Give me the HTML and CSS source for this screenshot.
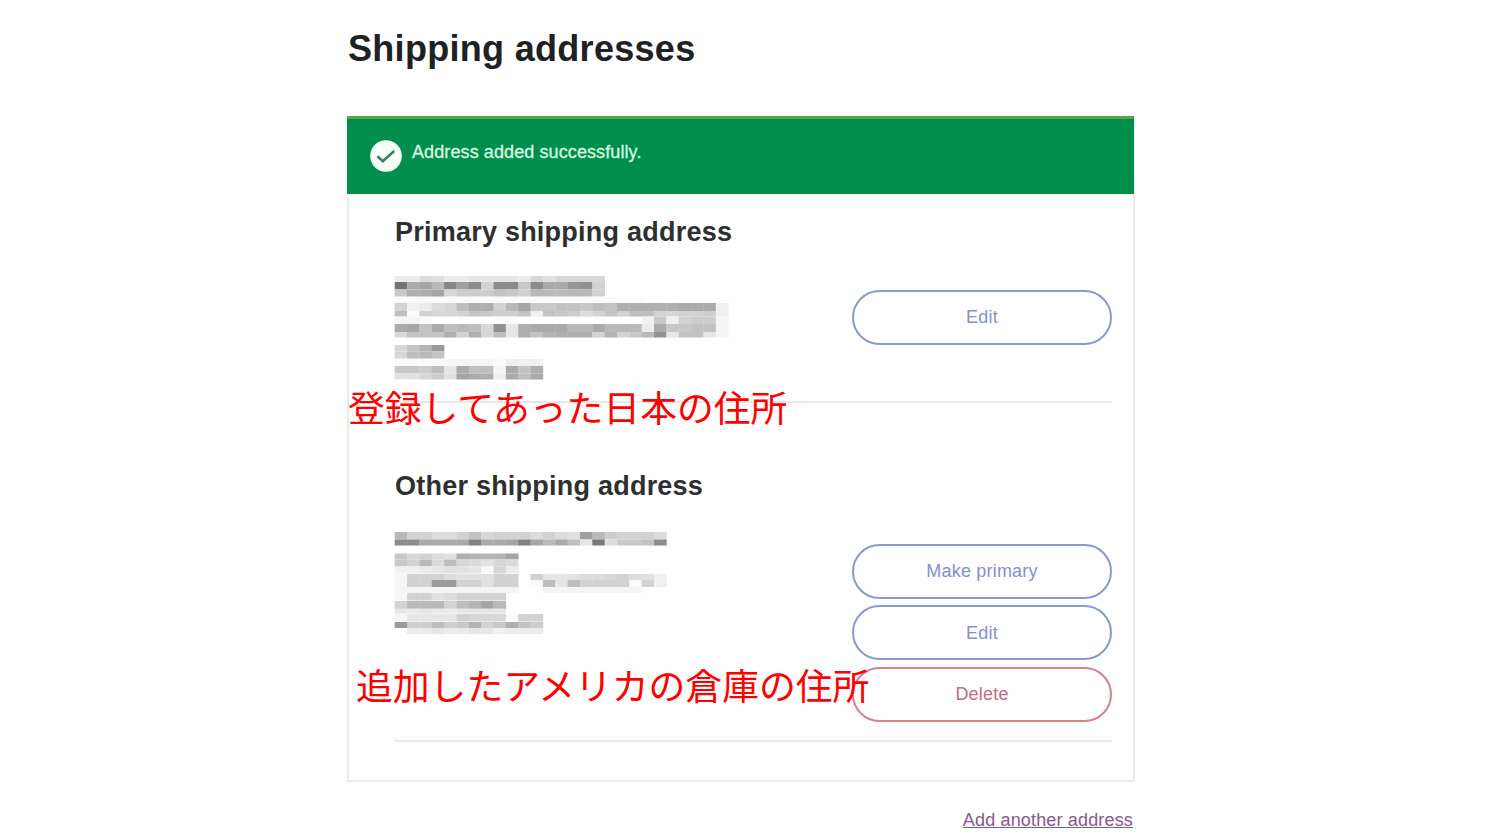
FILE: index.html
```html
<!DOCTYPE html>
<html lang="en">
<head>
<meta charset="utf-8">
<title>Shipping addresses</title>
<link rel="stylesheet" href="styles.css">
</head>
<body>
<main class="page">
  <h1 class="title">Shipping addresses</h1>
  <section class="card">
    <div class="notice">
      <svg class="notice-icon" viewBox="0 0 32 32"><circle cx="16" cy="16" r="15.8" fill="#f4fff8"/><path d="M7.5 16.2l5.3 5L24.2 11" fill="none" stroke="#3e7f60" stroke-width="2.6"/></svg>
      <span class="notice-text">Address added successfully.</span>
    </div>
    <article class="address primary">
      <h2 class="subtitle">Primary shipping address</h2>
      <div class="row">
        <svg class="redacted" id="redacted-primary" width="350" height="112"></svg>
        <div class="actions"><button class="btn">Edit</button></div>
      </div>
      <p class="note note-japan" lang="ja">登録してあった日本の住所</p>
    </article>
    <article class="address other">
      <h2 class="subtitle">Other shipping address</h2>
      <div class="row">
        <svg class="redacted" id="redacted-other" width="350" height="112"></svg>
        <div class="actions">
          <button class="btn">Make primary</button>
          <button class="btn">Edit</button>
          <button class="btn danger">Delete</button>
        </div>
      </div>
      <p class="note note-usa" lang="ja">追加したアメリカの倉庫の住所</p>
    </article>
  </section>
  <a class="add" href="#">Add another address</a>
</main>
<script src="script.js"></script>
</body>
</html>
```
FILE: styles.css
```css
* { box-sizing: border-box; }
html, body { overflow: hidden; }
body {
  margin: 0;
  height: 838px;
  background: #fefefe;
  font-family: "Liberation Sans", Arial, sans-serif;
}
.page {
  display: flex;
  flex-direction: column;
  width: 788px;
  margin-left: 347px;
  padding-top: 28px;
}
.title {
  margin: 0 0 46px 1px;
  font-size: 36px;
  line-height: 42px;
  letter-spacing: .3px;
  color: #202124;
}
.card {
  height: 666px;
  border: 2px solid #ebebeb;
  border-top: 0;
}
.notice {
  display: flex;
  gap: 10px;
  height: 78px;
  margin: 0 -1px 0 -2px;
  padding: 23px 0 0 23px;
  border-top: 3px solid #55a63d;
  background: #008e4c;
}
.notice-icon { width: 32px; height: 32px; margin-top: -2px; }
.notice-text {
  font-size: 18px;
  line-height: 20px;
  letter-spacing: .1px;
  color: #d9f8e3;
  -webkit-text-stroke: .3px #d9f8e3;
}
.address {
  position: relative;
  margin: 0 21px 0 46px;
  border-bottom: 2px solid #e8e8e8;
}
.primary { height: 209px; padding-top: 22px; }
.other { height: 339px; padding-top: 67px; }
.subtitle {
  margin: 0;
  font-size: 27px;
  line-height: 32px;
  letter-spacing: .23px;
  color: #2e2f31;
}
.row { display: flex; justify-content: space-between; padding-top: 22px; }
.redacted { display: block; margin-left: -7px; }
.other .redacted { margin-top: 2px; }
.actions {
  display: flex;
  flex-direction: column;
  gap: 6.5px;
  width: 260px;
  padding-top: 19.5px;
}
.btn {
  height: 55px;
  padding: 0;
  border: 2px solid #8c99cc;
  border-radius: 28px;
  background: transparent;
  color: #8490cf;
  font: 18px/20px "Liberation Sans", Arial, sans-serif;
  letter-spacing: .2px;
}
.danger { border-color: #d3848f; color: #c66d7b; }
.note {
  position: absolute;
  margin: 0;
  font: 36.8px/44px "Noto Sans CJK JP", sans-serif;
  color: #ff0000;
  white-space: nowrap;
}
.note-japan { left: -47px; top: 190px; }
.note-usa { left: -39px; top: 259px; }
.add {
  align-self: flex-end;
  margin: 27px 2px 0 0;
  font-size: 18px;
  line-height: 22px;
  letter-spacing: .16px;
  color: #87598f;
}
```
FILE: script.js
```js
// Each row is [top, height, cells]; a cell is a base-36 darkness step, 0 stays empty.
const CELL = 12.35;
const LEFT = 6.7;
const primary = [
  [6, 6, "44764455554868888"],
  [12, 7.5, "shieojn9nnbnhhlm9"],
  [19.5, 7, "bggi8aaacb9eeeee9"],
  [27, 6, "11111111111111111111"],
  [33, 8, "93478dgg9eibbccbdcggggghhh3"],
  [41, 5.5, "d19889cbaac3cba79c9dd9899a3"],
  [46.5, 7.5, "221000001100000000003b39aa2"],
  [54, 8, "hichded8m5ghhheeheee4hbbcc2"],
  [62, 5.5, "8cccg9g8d5gcfggg9f9bem5cc52"],
  [75, 6.5, "8cfk"],
  [81.5, 7, "8dec"],
  [89, 7, "111122221333"],
  [96, 7.5, "bbad5hdd2hcg"],
  [103.5, 6, "668a6ihg3hdh"]
];
const other = [
  [6, 7.5, "e99779c89997976jea9997"],
  [13.5, 6, "nnhhhhphhipiehd5r7bbcn"],
  [27.5, 6, "b8976gfffi"],
  [33.5, 7, "b9e7d87687"],
  [40.5, 7, "3345665184"],
  [48, 6, "2999766699095567789763"],
  [54, 7, "299kk9969901d5d9999193"],
  [61, 6, "2222222222002222222200"],
  [67, 7.5, "299679999"],
  [75, 8, "9eee9dfie"],
  [82.5, 5, "545445555"],
  [88, 7.5, "255559888199a".slice(0, 12)],
  [96, 6, "kaadabf9bgca"],
  [102, 6, "044544553444"]
];
function draw(id, rows) {
  const svg = document.getElementById(id);
  rows.forEach(([y, h, cells]) => {
    [...cells].forEach((c, i) => {
      const n = parseInt(c, 36);
      if (!n) return;
      const g = 255 - n * 5;
      const r = document.createElementNS("http://www.w3.org/2000/svg", "rect");
      r.setAttribute("x", LEFT + i * CELL);
      r.setAttribute("y", y);
      r.setAttribute("width", CELL + 0.3);
      r.setAttribute("height", h);
      r.setAttribute("fill", `rgb(${g},${g},${g})`);
      svg.appendChild(r);
    });
  });
}
draw("redacted-primary", primary);
draw("redacted-other", other);
```
